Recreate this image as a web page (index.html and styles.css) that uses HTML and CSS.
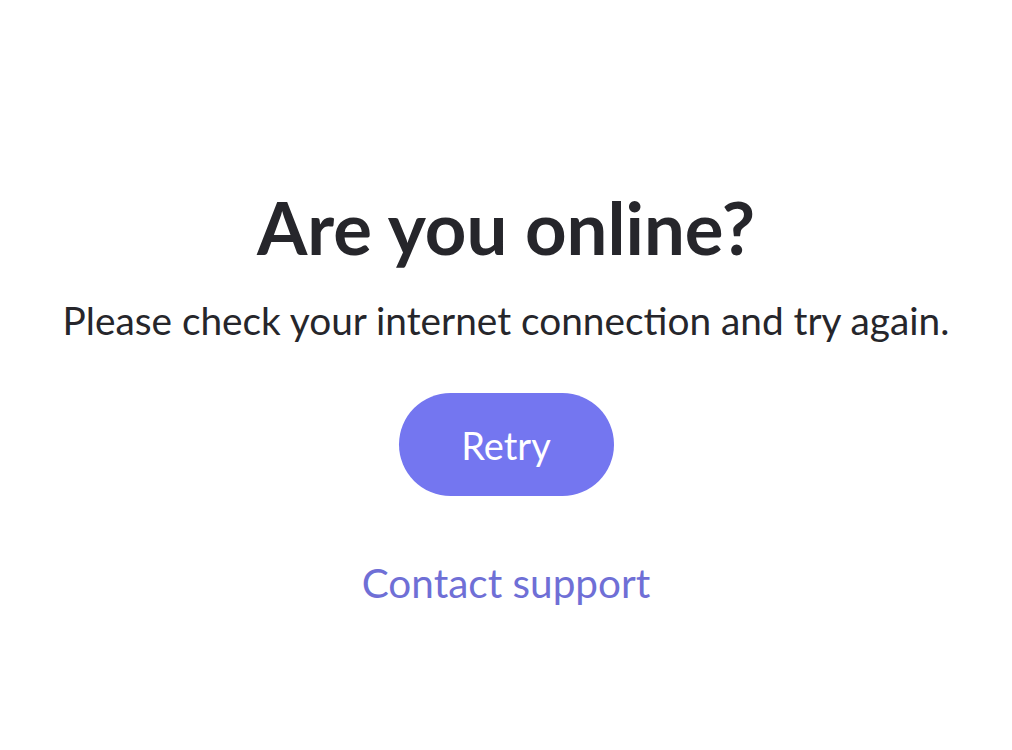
FILE: index.html
```html
<!DOCTYPE html>
<html lang="en">
<head>
    <meta charset="UTF-8">
    <meta name="viewport" content="width=device-width, initial-scale=1.0">
    <title>Are you online?</title>
    <link rel="stylesheet" href="styles.css">
</head>
<body>
    <!-- Offline message -->
    <div class="container">
        <h1 class="title">Are you online?</h1>
        <p class="message">Please check your internet connection and try again.</p>
        <button class="retry-button">Retry</button>
        <a class="support-link" href="#">Contact support</a>
    </div>
</body>
</html>
```
FILE: styles.css
```css
body {
    font-family: Lato, "Open Sans", sans-serif;
    background-color: #fff;
    margin: 0;
    padding: 0;
    color: #26262b;
}

.container {
    display: flex;
    flex-direction: column;
    align-items: center;
    padding-top: 187px;
}

.title {
    font-size: 72.5px;
    font-weight: bold;
    margin: 0;
    line-height: 80px;
}

.message {
    font-size: 38.8px;
    margin: 29px 0 0;
    line-height: 48px;
}

.retry-button {
    margin-top: 49px;
    width: 215px;
    height: 103px;
    border: none;
    border-radius: 52px;
    background-color: #7476f0;
    color: #fff;
    font-family: Lato, sans-serif;
    font-size: 38px;
    cursor: pointer;
}

.support-link {
    margin-top: 62px;
    font-size: 40.5px;
    color: #6f6fd6;
    text-decoration: none;
}
```
